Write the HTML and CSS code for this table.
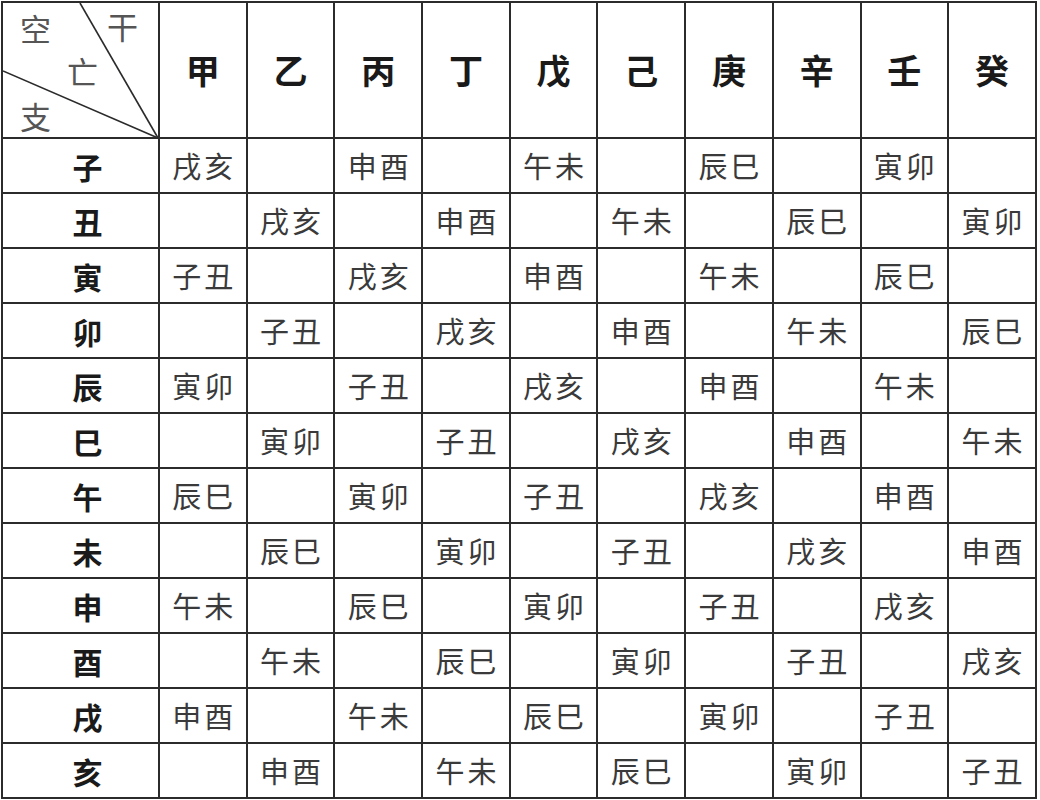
FILE: index.html
```html
<!DOCTYPE html>
<html lang="zh">
<head>
<meta charset="utf-8">
<title>空亡表</title>
<link rel="stylesheet" href="styles.css">
</head>
<body>
<table class="kw">
  <colgroup>
    <col class="c-first">
    <col><col><col><col><col><col><col><col><col><col>
  </colgroup>
  <thead>
    <tr class="hrow">
      <th class="corner">
        <div class="corner-box">
          <svg class="diag" width="157" height="136" viewBox="0 0 157 136">
            <line x1="77" y1="0" x2="155" y2="135" />
            <line x1="0" y1="68" x2="155" y2="135" />
          </svg>
          <span class="lbl l-kong">空</span>
          <span class="lbl l-gan">干</span>
          <span class="lbl l-wang">亡</span>
          <span class="lbl l-zhi">支</span>
        </div>
      </th>
      <th>甲</th><th>乙</th><th>丙</th><th>丁</th><th>戊</th><th>己</th><th>庚</th><th>辛</th><th>壬</th><th>癸</th>
    </tr>
  </thead>
  <tbody>
    <tr><th>子</th><td>戌亥</td><td></td><td>申酉</td><td></td><td>午未</td><td></td><td>辰巳</td><td></td><td>寅卯</td><td></td></tr>
    <tr><th>丑</th><td></td><td>戌亥</td><td></td><td>申酉</td><td></td><td>午未</td><td></td><td>辰巳</td><td></td><td>寅卯</td></tr>
    <tr><th>寅</th><td>子丑</td><td></td><td>戌亥</td><td></td><td>申酉</td><td></td><td>午未</td><td></td><td>辰巳</td><td></td></tr>
    <tr><th>卯</th><td></td><td>子丑</td><td></td><td>戌亥</td><td></td><td>申酉</td><td></td><td>午未</td><td></td><td>辰巳</td></tr>
    <tr><th>辰</th><td>寅卯</td><td></td><td>子丑</td><td></td><td>戌亥</td><td></td><td>申酉</td><td></td><td>午未</td><td></td></tr>
    <tr><th>巳</th><td></td><td>寅卯</td><td></td><td>子丑</td><td></td><td>戌亥</td><td></td><td>申酉</td><td></td><td>午未</td></tr>
    <tr><th>午</th><td>辰巳</td><td></td><td>寅卯</td><td></td><td>子丑</td><td></td><td>戌亥</td><td></td><td>申酉</td><td></td></tr>
    <tr><th>未</th><td></td><td>辰巳</td><td></td><td>寅卯</td><td></td><td>子丑</td><td></td><td>戌亥</td><td></td><td>申酉</td></tr>
    <tr><th>申</th><td>午未</td><td></td><td>辰巳</td><td></td><td>寅卯</td><td></td><td>子丑</td><td></td><td>戌亥</td><td></td></tr>
    <tr><th>酉</th><td></td><td>午未</td><td></td><td>辰巳</td><td></td><td>寅卯</td><td></td><td>子丑</td><td></td><td>戌亥</td></tr>
    <tr><th>戌</th><td>申酉</td><td></td><td>午未</td><td></td><td>辰巳</td><td></td><td>寅卯</td><td></td><td>子丑</td><td></td></tr>
    <tr><th>亥</th><td></td><td>申酉</td><td></td><td>午未</td><td></td><td>辰巳</td><td></td><td>寅卯</td><td></td><td>子丑</td></tr>
  </tbody>
</table>
</body>
</html>
```
FILE: styles.css
```css
html, body {
  margin: 0;
  padding: 0;
  background: #fff;
}
body {
  padding: 1px 0 0 1px;
  font-family: "Noto Sans CJK SC", "Noto Sans CJK JP", sans-serif;
  color: #222;
}
.kw {
  border-collapse: collapse;
  table-layout: fixed;
  width: 1036px;
}
.kw .c-first {
  width: 157px;
}
.kw th,
.kw td {
  border: 2px solid #2b2b2b;
  padding: 0;
  text-align: center;
  vertical-align: middle;
  line-height: 1;
}
.hrow th {
  height: 134px;
  font-size: 34px;
  font-weight: 700;
  color: #1a1a1a;
}
.kw tbody tr {
  height: 55px;
}
.kw tbody th {
  font-size: 30px;
  font-weight: 700;
  color: #1a1a1a;
  padding-left: 14px;
}
.kw tbody td {
  font-size: 29px;
  font-weight: 400;
  color: #3a3a3a;
  letter-spacing: 3px;
  text-indent: 3px;
}
.hrow th.corner {
  padding: 0;
}
.corner-box {
  position: relative;
  height: 134px;
  width: 100%;
}
.diag {
  position: absolute;
  left: 0;
  top: 0;
}
.diag line {
  stroke: #2b2b2b;
  stroke-width: 1.6;
}
.lbl {
  position: absolute;
  font-size: 31px;
  font-weight: 400;
  color: #555;
  line-height: 1;
}
.l-kong { left: 17px; top: 9px; }
.l-gan  { left: 104px; top: 7px; }
.l-wang { left: 64px; top: 52px; }
.l-zhi  { left: 17px; top: 97px; }
```
